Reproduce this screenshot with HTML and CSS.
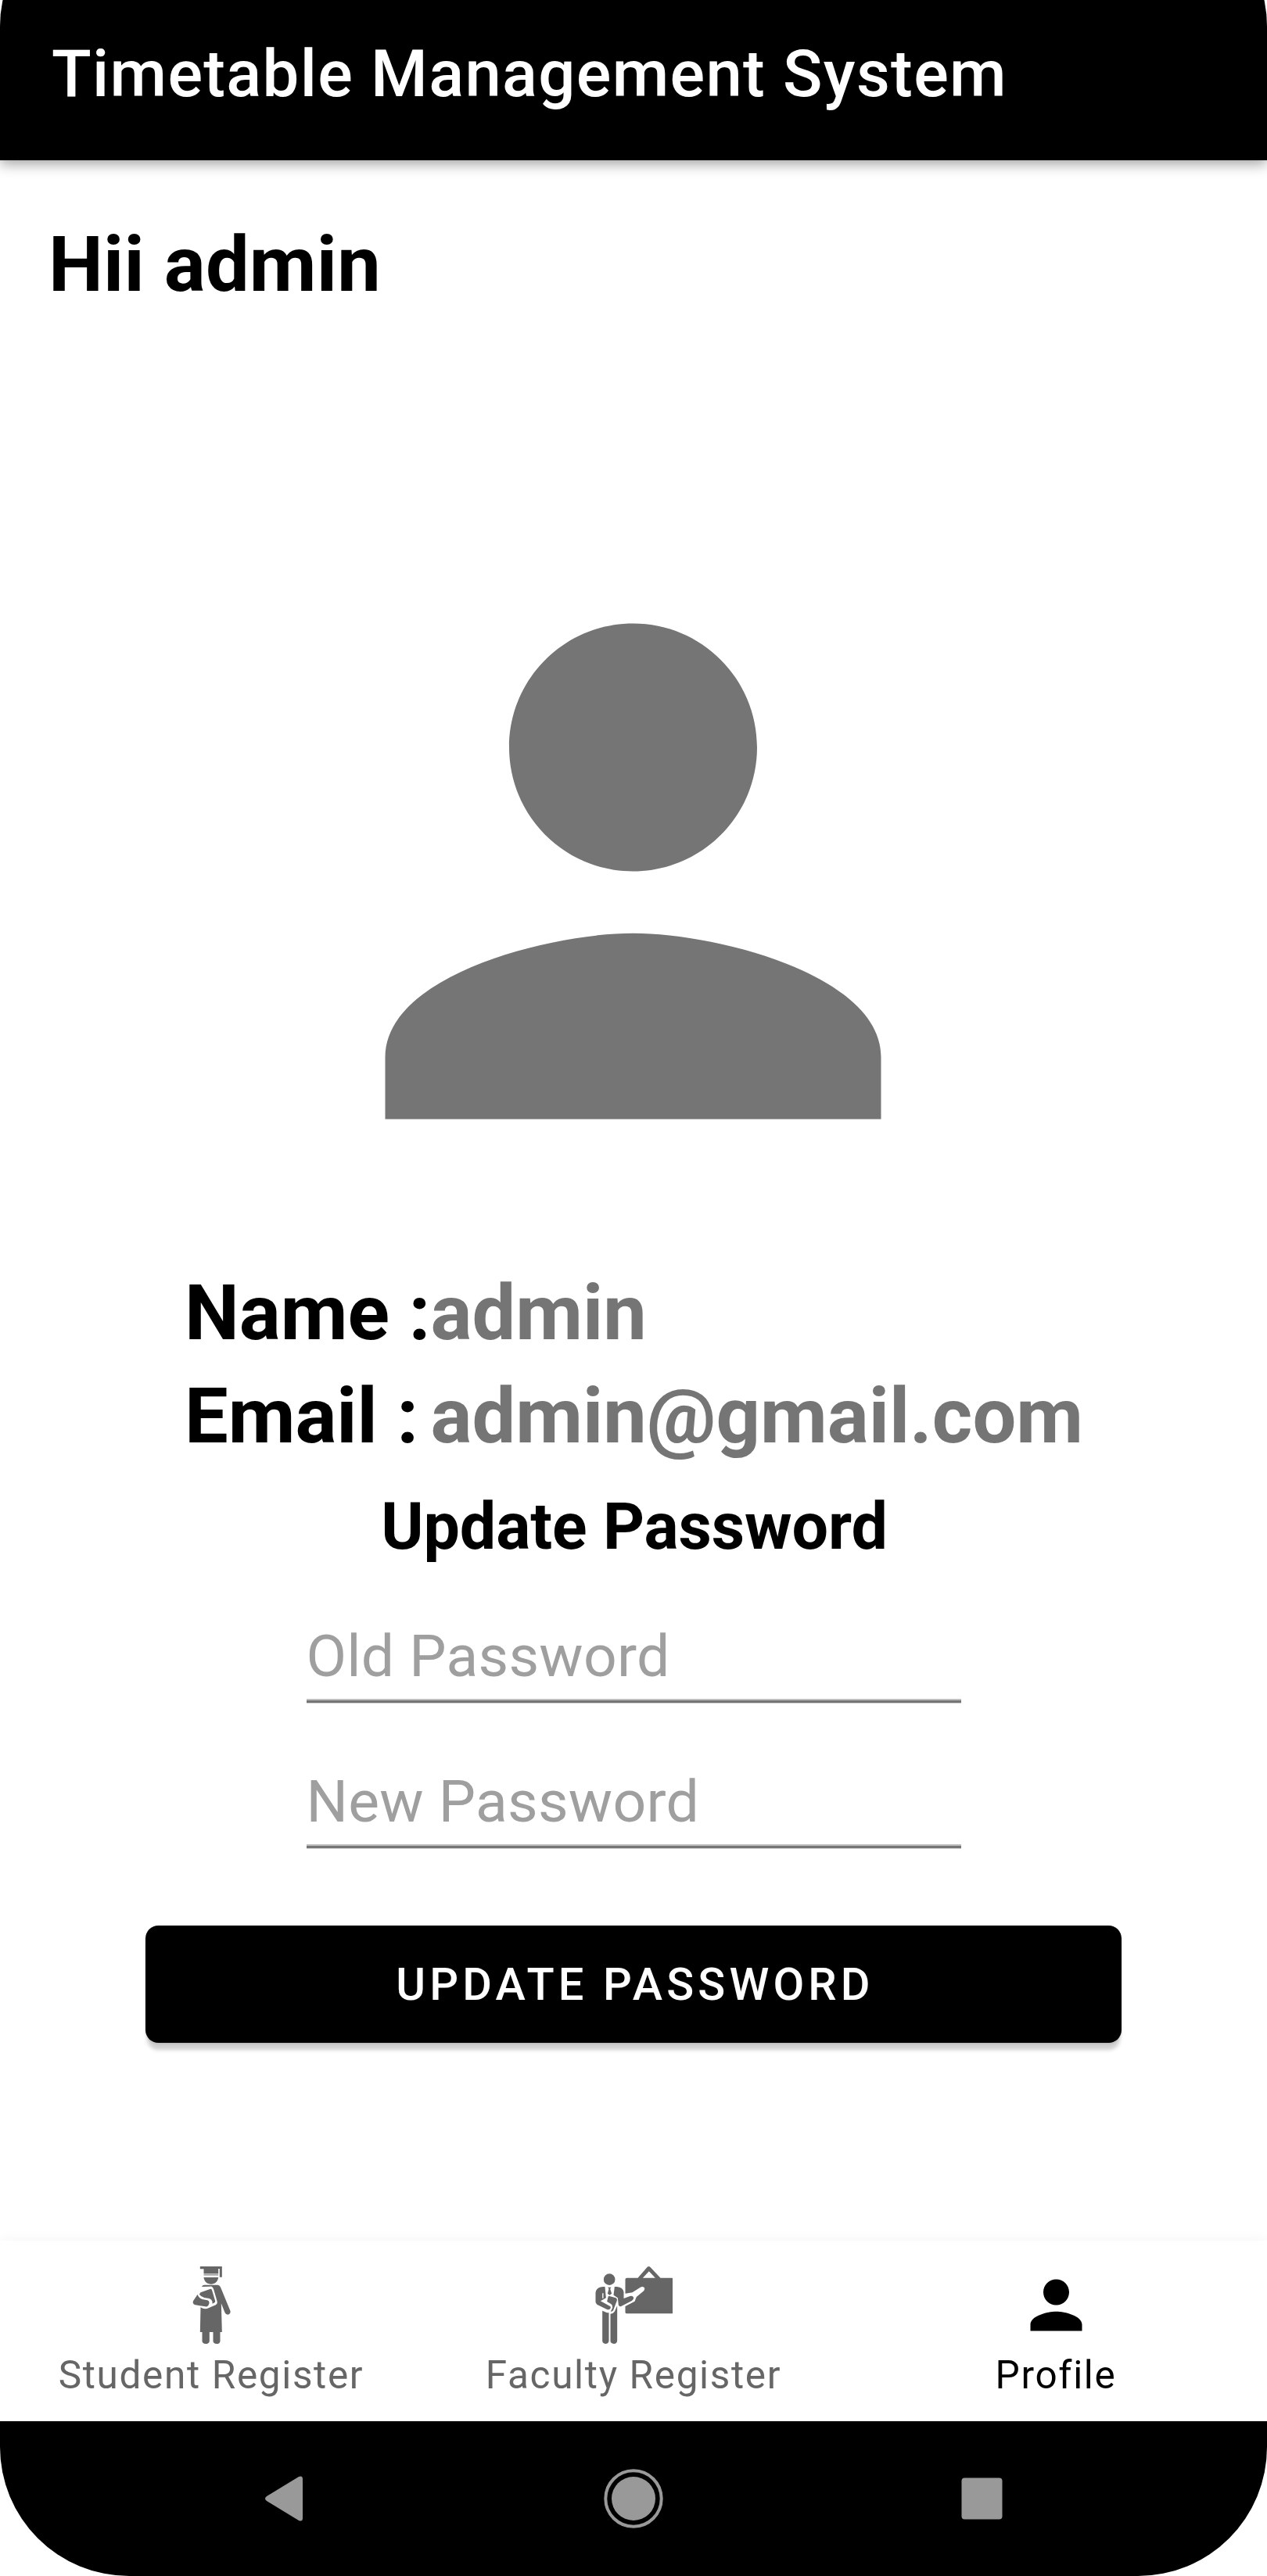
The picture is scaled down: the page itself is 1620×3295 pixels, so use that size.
FILE: index.html
```html
<!DOCTYPE html>
<html lang="en">
<head>
<meta charset="utf-8">
<title>Timetable Management System</title>
<link rel="stylesheet" href="styles.css">
</head>
<body>
<div class="screen">
  <header class="app-bar"><h1 class="app-title">Timetable Management System</h1></header>

  <main class="content">
    <p class="greeting">Hii admin</p>
    <svg class="avatar" viewBox="0 0 24 24" aria-hidden="true"><path d="M12 12c2.21 0 4-1.79 4-4s-1.79-4-4-4-4 1.79-4 4 1.79 4 4 4zm0 2c-2.67 0-8 1.34-8 4v2h16v-2c0-2.66-5.33-4-8-4z"/></svg>

    <dl class="details">
      <dt>Name :</dt><dd>admin</dd>
      <dt>Email :</dt><dd>admin@gmail.com</dd>
    </dl>

    <form class="password-form">
      <h2 class="form-title">Update Password</h2>
      <input class="field" type="text" placeholder="Old Password" aria-label="Old Password">
      <input class="field" type="text" placeholder="New Password" aria-label="New Password">
      <button class="submit" type="button">UPDATE PASSWORD</button>
    </form>
  </main>

  <nav class="tabs">
    <a class="tab">
      <svg class="tab-icon" viewBox="1.5 57 297 297" aria-hidden="true">
        <path d="M106 57H190V98H181V66H176V84H120V67H106Z"/>
        <path class="band" d="M120 85H176V92H120Z"/>
        <path d="M120 99H176C174 116 162 125 148 125S122 116 120 99Z"/>
        <path d="M112 135Q115 128 124 128H174Q182 129 185 138L222 228Q224 239 213 242Q204 242 201 234L187 199L190 309H183V344Q182 354 169 354Q157 353 156 344V309H142V344Q140 354 127 354Q115 353 114 344V309H106L108 214Q124 224 140 216L166 205Q174 200 171 190L158 145Q154 131 142 134Z"/>
        <path d="M108 157L144 144Q150 142 152 149L164 190Q165 196 159 197L153 200V192Q151 183 141 180L122 177Q108 172 103 164Z"/>
        <path d="M96 165Q101 178 114 183L134 187Q144 190 140 202Q137 213 126 211L88 205Q75 201 80 189Z"/>
      </svg>
      <span class="tab-label">Student Register</span>
    </a>
    <a class="tab">
      <svg class="tab-icon" viewBox="61.5 57 297 297" aria-hidden="true">
        <circle cx="116" cy="107" r="22"/>
        <path d="M225 101L261 60Q267 54 273 60L312 101H355Q360 101 360 106V234Q360 238 355 238H183Q177 238 177 233V210L213 191L220 174L248 151Q254 143 249 137Q242 133 235 137L204 157L177 161V107Q177 101 183 101ZM244 101H292L268 76Z"/>
        <path d="M92 135H99L103 178L82 190L119 210Q124 217 116 222Q111 224 105 221L70 204Q63 200 63 193V158Q65 137 92 135Z"/>
        <path class="hollow" d="M91 160V179"/>
        <path d="M136 135H145Q168 137 171 155V180L195 171Q205 168 209 176Q210 184 202 189L161 210Q154 213 151 205L148 178L132 167Z"/>
        <path d="M110 137H123L119 143L125 161L117 167L109 161L114 143Z"/>
        <path d="M116 171L141 178Q147 182 145 188L131 225Q128 231 121 230L128 215Q130 207 122 201L107 192L111 174Q112 170 116 171Z"/>
        <path d="M89 227L107 235H114V343Q113 354 101 354Q89 353 89 342ZM120 239Q130 239 136 230L146 208V342Q145 354 133 354Q120 353 120 343Z"/>
      </svg>
      <span class="tab-label">Faculty Register</span>
    </a>
    <a class="tab active">
      <svg class="tab-icon" viewBox="0 0 24 24" aria-hidden="true"><path d="M12 12c2.21 0 4-1.79 4-4s-1.79-4-4-4-4 1.79-4 4 1.79 4 4 4zm0 2c-2.67 0-8 1.34-8 4v2h16v-2c0-2.66-5.33-4-8-4z"/></svg>
      <span class="tab-label">Profile</span>
    </a>
  </nav>

  <footer class="system-bar">
    <svg class="key" viewBox="0 0 80 80" aria-hidden="true"><path d="M17 37L58 12Q63 10 63 15V65Q63 70 58 68L17 43Q13 40 17 37Z"/></svg>
    <svg class="key" viewBox="0 0 80 80" aria-hidden="true"><circle cx="40" cy="40" r="28"/><circle class="ring" cx="40" cy="40" r="35.7"/></svg>
    <svg class="key" viewBox="0 0 80 80" aria-hidden="true"><rect x="13.5" y="13.5" width="52" height="53" rx="4"/></svg>
  </footer>
</div>
</body>
</html>
```
FILE: styles.css
```css
* { box-sizing: border-box; }
body { margin: 0; background: #fff; font-family: Roboto, sans-serif; overflow: hidden; }

/* The screen's rounded top extends beyond the upper edge of the page. */
.screen {
  display: flex;
  flex-direction: column;
  width: 1620px;
  height: 3426px;
  margin-top: -131px;
  border-radius: 165px;
  overflow: hidden;
  background: #fff;
}

.app-bar {
  flex: none;
  height: 336px;
  padding: 171px 66px 0;
  background: #000;
  box-shadow: 0 5px 16px rgba(0, 0, 0, .36);
}
.app-title {
  margin: 0;
  color: #fff;
  font-size: 83.25px;
  font-weight: 500;
  line-height: 110px;
  letter-spacing: .0158em;
}

.content { flex: 1; display: flex; flex-direction: column; align-items: center; }
.greeting {
  align-self: flex-start;
  margin: 67px 0 0 62px;
  color: #000;
  font-size: 99px;
  font-weight: 700;
  line-height: 132px;
  letter-spacing: .2px;
}
.avatar { width: 951px; height: 951px; margin: 235px 1px 0 0; fill: #757575; }

.details {
  display: grid;
  grid-template-columns: auto auto;
  margin: 23px 0 0 1px;
  font-size: 99px;
  font-weight: 700;
  line-height: 132px;
}
.details dt { color: #000; }
.details dd { margin: 0; color: #757575; }

.password-form { display: flex; flex-direction: column; align-items: center; margin-top: 21px; }
.form-title { margin: 0 0 0 2px; color: #000; font-size: 82.5px; font-weight: 700; line-height: 110px; letter-spacing: -.1px; }
.field {
  width: 837px;
  height: 111px;
  margin-top: 75px;
  padding: 0 0 11px;
  border: 0;
  background: linear-gradient(transparent 105px, #bfbfbf 105px 107px, #757575 107px 110px, #d0d0d0 110px);
  color: #000;
  font: 400 75px/100px Roboto, sans-serif;
  letter-spacing: .25px;
}
.form-title + .field { margin-top: 60px; }
.field::placeholder { color: #9f9f9f; opacity: 1; }
.submit {
  width: 1248px;
  height: 150px;
  margin-top: 98px;
  padding: 1px 0 0 4px;
  border: 0;
  border-radius: 16.5px;
  background: #000;
  color: #fff;
  box-shadow: 0 11px 5px -2px rgba(0, 0, 0, .19), 0 1px 3px rgba(0, 0, 0, .12);
  font: 500 57.75px/77px Roboto, sans-serif;
  letter-spacing: .0893em;
}

.tabs {
  flex: none;
  display: grid;
  grid-template-columns: repeat(3, 1fr);
  height: 231px;
  background: #fff;
  box-shadow: 0 0 16px rgba(0, 0, 0, .05);
}
.tab { display: flex; flex-direction: column; align-items: center; padding-top: 33px; color: #666; }
.tab.active { color: #000; }
.tab-icon { width: 99px; height: 99px; fill: currentColor; }
.tab-icon .band { opacity: .6; }
.tab-icon .hollow { fill: none; stroke: #fff; stroke-width: 4; }
.tab-label { margin-top: 7px; font-size: 49.5px; line-height: 66px; letter-spacing: .0333em; white-space: nowrap; }

.system-bar {
  position: relative;
  flex: none;
  display: flex;
  justify-content: center;
  align-items: center;
  gap: 366px;
  height: 198px;
  background: #000;
}
.key { width: 80px; height: 80px; fill: #999; }
.key .ring { fill: none; stroke: #999; stroke-width: 4; }
```
